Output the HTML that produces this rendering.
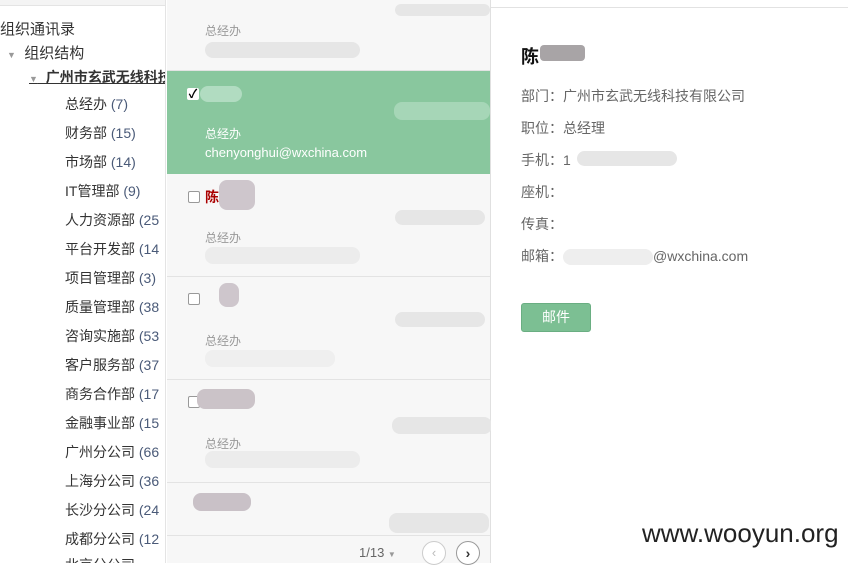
<!DOCTYPE html>
<html><head><meta charset="utf-8"><style>
*{margin:0;padding:0;box-sizing:border-box}
body{width:848px;height:563px;overflow:hidden;background:#fff;font-family:"Liberation Sans","Noto Sans CJK SC",sans-serif;position:relative;color:#333}
.left{position:absolute;left:0;top:0;width:166px;height:563px;background:#fff;overflow:hidden;border-right:1px solid #e4e4e4}
.left .top{position:absolute;left:0;top:0;width:166px;height:6px;border-bottom:1px solid #e4e4e4;background:#f4f4f4}
.t{position:absolute;white-space:nowrap;font-size:14px;line-height:18px}
.n{color:#4a5a78}
.mid{position:absolute;left:167px;top:0;width:324px;height:563px;background:#f7f7f7;border-right:1px solid #e0e0e0}
.row{position:absolute;left:0;width:323px;border-bottom:1px solid #e3e3e3}
.sm{position:absolute;font-size:12px;color:#999;white-space:nowrap}
.blur{position:absolute;border-radius:8px;background:#e6e6e6}
.cb{position:absolute;width:12px;height:12px;border:1px solid #999;background:#fff;border-radius:2px}
.right{position:absolute;left:491px;top:7px;width:357px;height:556px;background:#fff;border-top:1px solid #e2e2e2}
.f{position:absolute;left:30px;font-size:14px;color:#666;white-space:nowrap}
</style></head><body>
<div class="left">
<div class="top"></div>
<div class="t" style="left:0;top:21px;font-size:15px">组织通讯录</div>
<div class="t" style="left:7px;top:45px;font-size:15px"><span style="font-size:9px;color:#999">▼</span> &nbsp;组织结构</div>
<div class="t" style="left:29px;top:68px;font-weight:bold;text-decoration:underline;font-size:14px"><span style="font-size:9px;color:#999;font-weight:normal">▼</span> &nbsp;广州市玄武无线科技</div>
<div class="t" style="left:65px;top:95px">总经办 <span class="n">(7)</span></div>
<div class="t" style="left:65px;top:124px">财务部 <span class="n">(15)</span></div>
<div class="t" style="left:65px;top:153px">市场部 <span class="n">(14)</span></div>
<div class="t" style="left:65px;top:182px">IT管理部 <span class="n">(9)</span></div>
<div class="t" style="left:65px;top:211px">人力资源部 <span class="n">(25</span></div>
<div class="t" style="left:65px;top:240px">平台开发部 <span class="n">(14</span></div>
<div class="t" style="left:65px;top:269px">项目管理部 <span class="n">(3)</span></div>
<div class="t" style="left:65px;top:298px">质量管理部 <span class="n">(38</span></div>
<div class="t" style="left:65px;top:327px">咨询实施部 <span class="n">(53</span></div>
<div class="t" style="left:65px;top:356px">客户服务部 <span class="n">(37</span></div>
<div class="t" style="left:65px;top:385px">商务合作部 <span class="n">(17</span></div>
<div class="t" style="left:65px;top:414px">金融事业部 <span class="n">(15</span></div>
<div class="t" style="left:65px;top:443px">广州分公司 <span class="n">(66</span></div>
<div class="t" style="left:65px;top:472px">上海分公司 <span class="n">(36</span></div>
<div class="t" style="left:65px;top:501px">长沙分公司 <span class="n">(24</span></div>
<div class="t" style="left:65px;top:530px">成都分公司 <span class="n">(12</span></div>
<div class="t" style="left:65px;top:556px">北京分公司</div>
</div>
<div class="mid">
<div class="row" style="top:0;height:71px">
<div class="sm" style="left:38px;top:22px">总经办</div>
<div class="blur" style="left:38px;top:42px;width:155px;height:16px"></div>
<div class="blur" style="left:228px;top:4px;width:95px;height:12px"></div>
</div>
<div class="row" style="top:71px;height:103px;background:#89c79e;border:none">
<div class="cb" style="left:20px;top:17px;border:none;text-align:center;font-size:12px;line-height:12px;color:#000;font-weight:bold">✓</div>
<div class="blur" style="left:33px;top:15px;width:42px;height:16px;background:#b1dcc1"></div>
<div class="blur" style="left:227px;top:31px;width:96px;height:18px;background:#a6d6b7"></div>
<div class="sm" style="left:38px;top:54px;color:#fff">总经办</div>
<div class="sm" style="left:38px;top:74px;color:#fff;font-size:13px">chenyonghui@wxchina.com</div>
</div>
<div class="row" style="top:174px;height:103px">
<div class="cb" style="left:21px;top:17px"></div>
<div class="t" style="left:38px;top:14px;font-weight:bold;color:#a00">陈</div>
<div class="blur" style="left:52px;top:6px;width:36px;height:30px;background:#cec6cc"></div>
<div class="blur" style="left:228px;top:36px;width:90px;height:15px"></div>
<div class="sm" style="left:38px;top:55px">总经办</div>
<div class="blur" style="left:38px;top:73px;width:155px;height:17px;background:#ececec"></div>
</div>
<div class="row" style="top:277px;height:103px">
<div class="cb" style="left:21px;top:16px"></div>
<div class="blur" style="left:52px;top:6px;width:20px;height:24px;background:#cec6cc"></div>
<div class="blur" style="left:228px;top:35px;width:90px;height:15px"></div>
<div class="sm" style="left:38px;top:55px">总经办</div>
<div class="blur" style="left:38px;top:73px;width:130px;height:17px;background:#efefef"></div>
</div>
<div class="row" style="top:380px;height:103px">
<div class="cb" style="left:21px;top:16px"></div>
<div class="blur" style="left:30px;top:9px;width:58px;height:20px;background:#cbc3c8"></div>
<div class="blur" style="left:225px;top:37px;width:100px;height:17px"></div>
<div class="sm" style="left:38px;top:55px">总经办</div>
<div class="blur" style="left:38px;top:71px;width:155px;height:17px;background:#ececec"></div>
</div>
<div class="row" style="top:483px;height:53px">
<div class="blur" style="left:26px;top:10px;width:58px;height:18px;background:#c9c1c7"></div>
<div class="blur" style="left:222px;top:30px;width:100px;height:20px"></div>
</div>
<div style="position:absolute;left:192px;top:545px;font-size:13px;color:#666">1/13 <span style="font-size:8px;color:#999">▼</span></div>
<div style="position:absolute;left:255px;top:541px;width:24px;height:24px;border:1px solid #ccc;border-radius:50%;background:#fff;color:#bbb;text-align:center;font-size:13px;line-height:22px">‹</div>
<div style="position:absolute;left:289px;top:541px;width:24px;height:24px;border:1px solid #999;border-radius:50%;background:#fff;color:#333;text-align:center;font-size:14px;font-weight:bold;line-height:22px">›</div>
</div>
<div class="right">
<div style="position:absolute;left:30px;top:35px;font-size:18px;font-weight:bold;color:#111">陈</div>
<div class="blur" style="left:49px;top:37px;width:45px;height:16px;background:#a8a4a6;border-radius:4px"></div>
<div class="f" style="top:78px">部门：广州市玄武无线科技有限公司</div>
<div class="f" style="top:110px">职位：总经理</div>
<div class="f" style="top:142px">手机：1</div>
<div class="blur" style="left:86px;top:143px;width:100px;height:15px"></div>
<div class="f" style="top:174px">座机：</div>
<div class="f" style="top:206px">传真：</div>
<div class="f" style="top:238px">邮箱：<span style="display:inline-block;width:90px;height:16px;background:#eee;border-radius:8px;vertical-align:middle"></span>@wxchina.com</div>
<div style="position:absolute;left:30px;top:295px;width:70px;height:29px;background:#7cbf93;border:1px solid #6aae82;border-radius:3px;color:#fff;font-size:14px;text-align:center;line-height:27px">邮件</div>
</div>
<div style="position:absolute;left:642px;top:518px;font-size:26px;color:#222;white-space:nowrap">www.wooyun.org</div>
</body></html>
